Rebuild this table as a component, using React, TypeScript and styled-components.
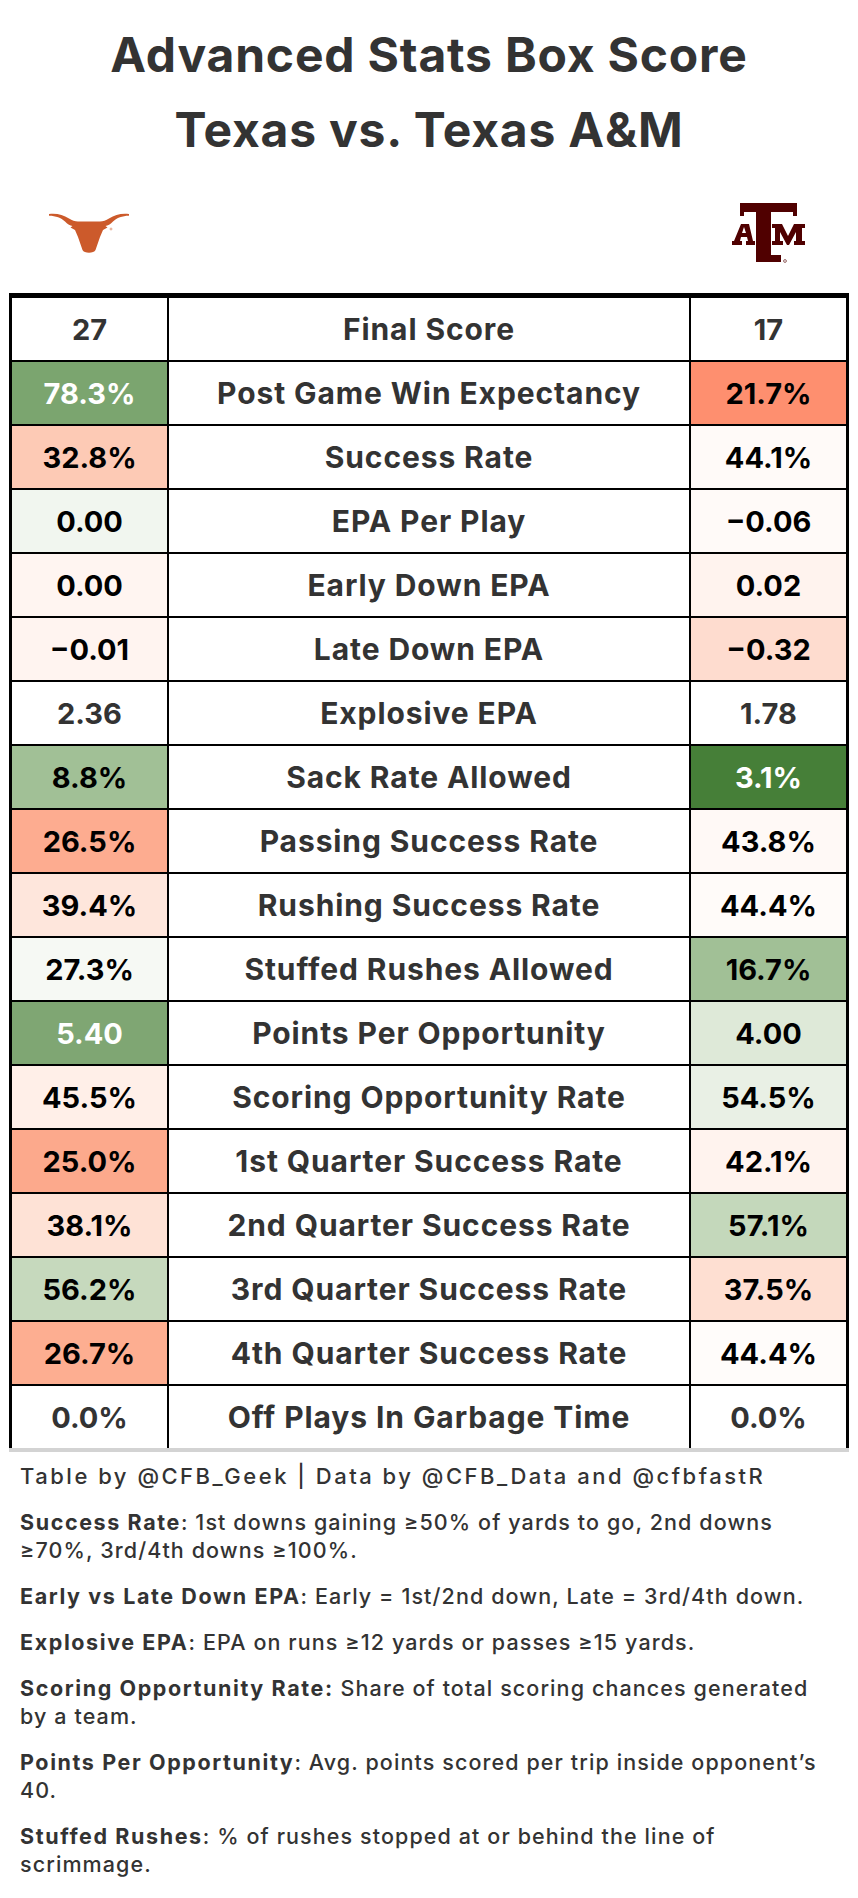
import React from "react";
import styled, { createGlobalStyle } from "styled-components";

const GlobalStyle = createGlobalStyle`
  body {
    margin: 0;
    background: #ffffff;
    font-family: Inter, Roboto, "Liberation Sans", sans-serif;
  }
`;

const Page = styled.div`
  width: 858px;
  background: #ffffff;
  padding-bottom: 20px;
`;

const Header = styled.header`
  text-align: center;
  padding-top: 17px;
`;

const TitleLine = styled.h1`
  margin: 0;
  font-size: 48px;
  line-height: 75px;
  font-weight: 700;
  letter-spacing: 0.8px;
  color: #333333;
`;

const LogoRow = styled.div`
  display: grid;
  grid-template-columns: 160px 520px 160px;
  align-items: center;
  justify-items: center;
  width: 840px;
  height: 60px;
  margin: 36px 0 30px 9px;
`;

const Table = styled.div`
  width: 840px;
  margin-left: 9px;
  box-sizing: border-box;
  border-top: 5px solid #000;
  border-left: 3px solid #000;
  border-right: 3px solid #000;
`;

const Row = styled.div<{ $last?: boolean }>`
  display: grid;
  grid-template-columns: 157px 522px 155px;
  box-sizing: border-box;
  height: ${(p) => (p.$last ? "62px" : "64px")};
  border-bottom: ${(p) => (p.$last ? "none" : "2px solid #000")};
`;

const Cell = styled.div<{ $bg?: string; $ink?: string; $divider?: boolean }>`
  display: flex;
  align-items: center;
  justify-content: center;
  box-sizing: border-box;
  background: ${(p) => p.$bg || "#ffffff"};
  color: ${(p) => p.$ink || "#333333"};
  border-right: ${(p) => (p.$divider ? "2px solid #000" : "none")};
  font-size: 29px;
  font-weight: 700;
  white-space: nowrap;
`;

const LabelCell = styled(Cell)`
  font-size: 30px;
  letter-spacing: 0.9px;
`;

const BottomRule = styled.div`
  width: 840px;
  height: 4px;
  margin-left: 9px;
  background: #d3d3d3;
`;

const Notes = styled.section`
  padding: 10px 20px 0 20px;
  width: 830px;
`;

const Note = styled.p`
  margin: 0 0 18px;
  font-size: 21.5px;
  line-height: 28px;
  font-weight: 500;
  letter-spacing: 1.1px;
  color: #333333;
  white-space: nowrap;
`;

const CreditLine = styled(Note)`
  font-size: 22px;
  letter-spacing: 2.5px;
`;

const NoteLabel = styled.span`
  font-weight: 700;
  letter-spacing: 1.6px;
`;

type Side = { v: string; bg?: string; ink?: string };
type Stat = { label: string; left: Side; right: Side };

const DARK = "#000000";
const LIGHT = "#ffffff";

const stats: Stat[] = [
  { label: "Final Score", left: { v: "27" }, right: { v: "17" } },
  {
    label: "Post Game Win Expectancy",
    left: { v: "78.3%", bg: "#7ba56f", ink: LIGHT },
    right: { v: "21.7%", bg: "#fe8f6f", ink: DARK },
  },
  {
    label: "Success Rate",
    left: { v: "32.8%", bg: "#fdcab5", ink: DARK },
    right: { v: "44.1%", bg: "#fffaf8", ink: DARK },
  },
  {
    label: "EPA Per Play",
    left: { v: "0.00", bg: "#f1f6ef", ink: DARK },
    right: { v: "\u22120.06", bg: "#fffaf8", ink: DARK },
  },
  {
    label: "Early Down EPA",
    left: { v: "0.00", bg: "#fff5f1", ink: DARK },
    right: { v: "0.02", bg: "#fff3ee", ink: DARK },
  },
  {
    label: "Late Down EPA",
    left: { v: "\u22120.01", bg: "#fff4f0", ink: DARK },
    right: { v: "\u22120.32", bg: "#fedccf", ink: DARK },
  },
  { label: "Explosive EPA", left: { v: "2.36" }, right: { v: "1.78" } },
  {
    label: "Sack Rate Allowed",
    left: { v: "8.8%", bg: "#a1c096", ink: DARK },
    right: { v: "3.1%", bg: "#467f38", ink: LIGHT },
  },
  {
    label: "Passing Success Rate",
    left: { v: "26.5%", bg: "#fdac90", ink: DARK },
    right: { v: "43.8%", bg: "#fff9f6", ink: DARK },
  },
  {
    label: "Rushing Success Rate",
    left: { v: "39.4%", bg: "#fee6dc", ink: DARK },
    right: { v: "44.4%", bg: "#fffbf9", ink: DARK },
  },
  {
    label: "Stuffed Rushes Allowed",
    left: { v: "27.3%", bg: "#f6f9f4", ink: DARK },
    right: { v: "16.7%", bg: "#a1c096", ink: DARK },
  },
  {
    label: "Points Per Opportunity",
    left: { v: "5.40", bg: "#7fa673", ink: LIGHT },
    right: { v: "4.00", bg: "#dee9d8", ink: DARK },
  },
  {
    label: "Scoring Opportunity Rate",
    left: { v: "45.5%", bg: "#ffefe8", ink: DARK },
    right: { v: "54.5%", bg: "#e9f0e5", ink: DARK },
  },
  {
    label: "1st Quarter Success Rate",
    left: { v: "25.0%", bg: "#fca98c", ink: DARK },
    right: { v: "42.1%", bg: "#fff3ee", ink: DARK },
  },
  {
    label: "2nd Quarter Success Rate",
    left: { v: "38.1%", bg: "#fee2d6", ink: DARK },
    right: { v: "57.1%", bg: "#c4d8bb", ink: DARK },
  },
  {
    label: "3rd Quarter Success Rate",
    left: { v: "56.2%", bg: "#c6d9bd", ink: DARK },
    right: { v: "37.5%", bg: "#fedfd2", ink: DARK },
  },
  {
    label: "4th Quarter Success Rate",
    left: { v: "26.7%", bg: "#fdae91", ink: DARK },
    right: { v: "44.4%", bg: "#fffcfa", ink: DARK },
  },
  { label: "Off Plays In Garbage Time", left: { v: "0.0%" }, right: { v: "0.0%" } },
];

function Longhorn() {
  return (
    <svg width="80" height="41" viewBox="0 0 80 41">
      <path
        fill="#cc5a2b"
        d="M0,1 C8,0 14,2 20,5.5 C23,7.5 26,8.5 29,8.5 L51,8.5 C54,8.5 57,7.5 60,5.5 C66,2 72,0 80,1 L80,2.8 C73,2.8 68,5 64,8.5 C61,11.5 59,12.5 56.5,13 L58.5,14.5 L54,17 L51,24 L46.5,37 C45,40.5 35,40.5 33.5,37 L29,24 L26,17 L21.5,14.5 L23.5,13 C21,12.5 19,11.5 16,8.5 C12,5 7,2.8 0,2.8 Z"
      />
      <circle cx="62" cy="16" r="1" fill="none" stroke="#cc5a2b" strokeWidth="0.5" />
    </svg>
  );
}

function AggieLogo() {
  return (
    <svg width="74" height="61" viewBox="0 0 74 61">
      <g fill="#500000">
        <path d="M8,0 H65 V13 H61 V9 H39 V52 H49 V59 H24 V9 H12 V13 H8 Z" />
        <path
          fillRule="evenodd"
          d="M9,21 H17 L21,38 H23 V42 H14 V38 H16 L15,34 H9 L8,38 H10 V42 H0 V38 H2 Z M10,30 H14 L12,24 Z"
        />
        <path d="M40,21 H50 L56,33 L62,21 H73 V25 H70 V38 H73 V42 H62 V38 H64 V29 L57,42 H55 L48,29 V38 H51 V42 H40 V38 H43 V25 H40 Z" />
      </g>
      <circle cx="53" cy="58" r="1.4" fill="none" stroke="#500000" strokeWidth="0.6" />
    </svg>
  );
}

export default function App() {
  return (
    <Page>
      <GlobalStyle />
      <Header>
        <TitleLine>Advanced Stats Box Score</TitleLine>
        <TitleLine>Texas vs. Texas A&amp;M</TitleLine>
      </Header>
      <LogoRow>
        <Longhorn />
        <span />
        <AggieLogo />
      </LogoRow>
      <Table>
        {stats.map((s, i) => (
          <Row key={s.label} $last={i === stats.length - 1}>
            <Cell $divider $bg={s.left.bg} $ink={s.left.ink}>
              {s.left.v}
            </Cell>
            <LabelCell $divider>{s.label}</LabelCell>
            <Cell $bg={s.right.bg} $ink={s.right.ink}>
              {s.right.v}
            </Cell>
          </Row>
        ))}
      </Table>
      <BottomRule />
      <Notes>
        <CreditLine>Table by @CFB_Geek | Data by @CFB_Data and @cfbfastR</CreditLine>
        <Note>
          <NoteLabel>Success Rate</NoteLabel>: 1st downs gaining ≥50% of yards to go, 2nd downs
          <br />
          ≥70%, 3rd/4th downs ≥100%.
        </Note>
        <Note>
          <NoteLabel>Early vs Late Down EPA</NoteLabel>: Early = 1st/2nd down, Late = 3rd/4th down.
        </Note>
        <Note>
          <NoteLabel>Explosive EPA</NoteLabel>: EPA on runs ≥12 yards or passes ≥15 yards.
        </Note>
        <Note>
          <NoteLabel>Scoring Opportunity Rate:</NoteLabel> Share of total scoring chances generated
          <br />
          by a team.
        </Note>
        <Note>
          <NoteLabel>Points Per Opportunity</NoteLabel>: Avg. points scored per trip inside
          opponent’s
          <br />
          40.
        </Note>
        <Note>
          <NoteLabel>Stuffed Rushes</NoteLabel>: % of rushes stopped at or behind the line of
          <br />
          scrimmage.
        </Note>
      </Notes>
    </Page>
  );
}
